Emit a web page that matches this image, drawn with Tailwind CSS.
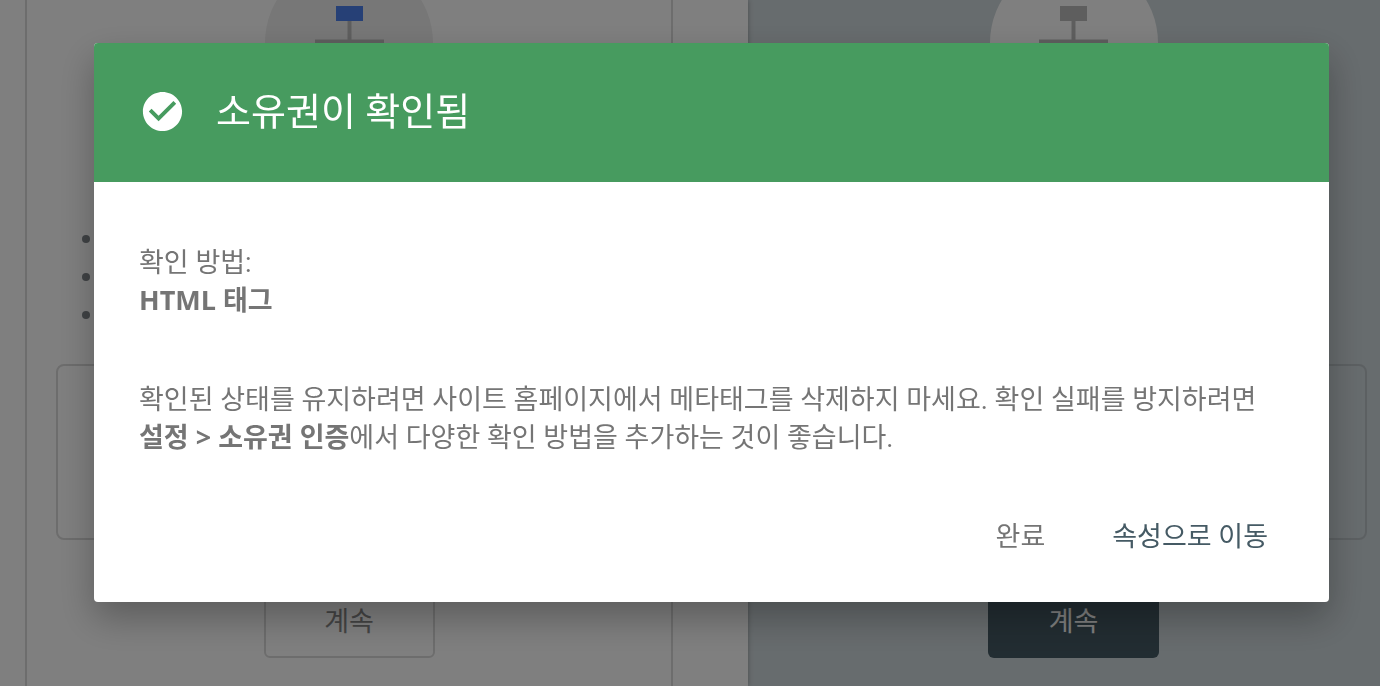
<!DOCTYPE html>
<html lang="ko">
<head>
    <meta charset="UTF-8">
    <meta name="viewport" content="width=device-width, initial-scale=1.0">
    <title>소유권 확인</title>
    <script src="https://cdn.jsdelivr.net/npm/@tailwindcss/browser@4"></script>
</head>
<body class="h-screen overflow-hidden font-['Roboto','Noto_Sans_CJK_KR',sans-serif] text-[27px] leading-[38px] text-[#757575]">
    <!-- Property type picker, scrolled behind the dialog -->
    <main class="grid h-full grid-cols-[748fr_632fr] overflow-hidden bg-white">
        <section class="z-10 bg-white pr-[75px] pl-[25px] shadow-[0_0_5px_rgba(0,0,0,0.3)]">
            <div class="flex h-full flex-col items-center border-x-2 border-[#dadada] px-[29px]">
                <div class="-mt-[41px] h-[168px] w-[168px] shrink-0 rounded-full bg-[#eeeeee]">
                    <svg class="h-full w-full" viewBox="0 0 168 168" aria-hidden="true">
                        <rect x="71" y="47" width="27" height="15" fill="#4d80ed"/>
                        <path d="M84.500 62v20M50 82.500h69" stroke="#bdbdbd" stroke-width="4" fill="none"/>
                    </svg>
                </div>
                <ul class="mt-[93px] w-full shrink-0 pl-[26px]">
                    <li class="flex h-[38px] items-center"><span class="size-2 rounded-full bg-[#80868b]"></span></li>
                    <li class="flex h-[38px] items-center"><span class="size-2 rounded-full bg-[#80868b]"></span></li>
                    <li class="flex h-[38px] items-center"><span class="size-2 rounded-full bg-[#80868b]"></span></li>
                </ul>
                <div class="mt-[30px] h-[176px] w-full shrink-0 rounded-lg border-2 border-[#dadada]"></div>
                <button class="mt-[45px] h-[73px] w-[171px] shrink-0 rounded-md border-2 border-[#dadada] text-[#8a8a8a]">계속</button>
            </div>
        </section>

        <section class="flex flex-col items-center bg-[#cfd8dc] pr-[13px] pl-[32px]">
            <div class="-mt-[41px] h-[168px] w-[168px] shrink-0 rounded-full bg-white">
                <svg class="h-full w-full" viewBox="0 0 168 168" aria-hidden="true">
                    <rect x="70" y="47" width="27" height="15" fill="#bdbdbd"/>
                    <path d="M83.500 62v20M49 82.500h69" stroke="#bdbdbd" stroke-width="4" fill="none"/>
                </svg>
            </div>
            <div class="mt-[237px] h-[176px] w-full shrink-0 rounded-lg border-2 border-[#b9c1c5]"></div>
            <button class="mt-[45px] h-[73px] w-[171px] shrink-0 rounded-md bg-[#455a64] text-white">계속</button>
        </section>
    </main>

    <!-- Verified dialog -->
    <div class="fixed inset-0 z-50 bg-black/50 pt-[43px] pr-[51px] pl-[94px]">
        <div role="dialog" aria-labelledby="dialogTitle" class="overflow-hidden rounded bg-white shadow-[0_16px_36px_rgba(0,0,0,0.28)]">
            <header class="flex h-[139px] items-center gap-[30px] bg-[#479b5f] px-[45px] pb-[2px] text-white">
                <svg class="size-[47px]" viewBox="0 0 24 24" fill="currentColor" aria-hidden="true">
                    <path d="M12 2C6.480 2 2 6.480 2 12s4.480 10 10 10 10-4.480 10-10S17.520 2 12 2zm-2 15l-5-5 1.410-1.410L10 14.170l7.590-7.590L19 8l-9 9z"/>
                </svg>
                <h2 id="dialogTitle" class="text-[38px] leading-[48px]">소유권이 확인됨</h2>
            </header>
            <div class="px-[45px] pt-[62px]">
                <p>확인 방법:<br><strong class="font-['Open_Sans','Noto_Sans_CJK_KR',sans-serif] leading-none">HTML 태그</strong></p>
                <p class="mt-[61px]">확인된 상태를 유지하려면 사이트 홈페이지에서 메타태그를 삭제하지 마세요. 확인 실패를 방지하려면 <strong class="font-['Open_Sans','Noto_Sans_CJK_KR',sans-serif] leading-none">설정 &gt; 소유권 인증</strong>에서 다양한 확인 방법을 추가하는 것이 좋습니다.</p>
            </div>
            <div class="flex justify-end gap-[67px] px-[61px] pt-[61px] pb-[46px]">
                <button>완료</button>
                <button class="text-[#455a64]">속성으로 이동</button>
            </div>
        </div>
    </div>
</body>
</html>
